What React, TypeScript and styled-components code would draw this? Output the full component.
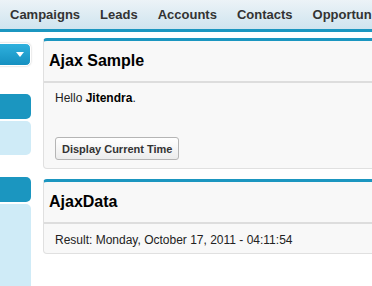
import React from "react";
import styled, { createGlobalStyle } from "styled-components";

const GlobalStyle = createGlobalStyle`
  html, body {
    margin: 0;
    padding: 0;
    background: #fff;
    font-family: "Liberation Sans", Arial, sans-serif;
    overflow: hidden;
  }
`;

const tabs = ["Campaigns", "Leads", "Accounts", "Contacts", "Opportunities"];

const App = () => {
  return (
    <>
      <GlobalStyle />
      <TabBar>
        {tabs.map((t) => (
          <Tab key={t}>{t}</Tab>
        ))}
      </TabBar>
      <Body>
        <Sidebar>
          <PickButton>
            <svg width="8" height="5" viewBox="0 0 8 5">
              <path d="M0 0 H8 L4 5 Z" fill="#fff" />
            </svg>
          </PickButton>
          <SideHead $top={28} />
          <SideBox $height={34} />
          <SideHead $top={22} />
          <SideBox $height={90} />
        </Sidebar>
        <Main>
          <Panel>
            <PanelHead>Ajax Sample</PanelHead>
            <PanelBody>
              <Line>
                Hello <b>Jitendra</b>.
              </Line>
              <Button>Display Current Time</Button>
            </PanelBody>
          </Panel>
          <Panel>
            <PanelHead>AjaxData</PanelHead>
            <PanelBody $compact>
              <Line>Result: Monday, October 17, 2011 - 04:11:54</Line>
            </PanelBody>
          </Panel>
        </Main>
      </Body>
    </>
  );
};

export default App;

const TabBar = styled.div`
  display: flex;
  height: 29px;
  background: linear-gradient(#ecf3f7, #cfe4ef);
  border-bottom: 3px solid #1b96c0;
  white-space: nowrap;
  overflow: hidden;
`;

const Tab = styled.div`
  padding: 0 10px;
  line-height: 30px;
  font-size: 13px;
  font-weight: bold;
  color: #333;
`;

const Body = styled.div`
  display: flex;
  gap: 12px;
`;

const Sidebar = styled.div`
  width: 31px;
  flex: none;
  display: flex;
  flex-direction: column;
`;

const PickButton = styled.div`
  margin: 11px 0 0 -6px;
  height: 21px;
  border: 1px solid #fff;
  border-radius: 0 5px 5px 0;
  box-shadow: 0 0 2px #bbb;
  background: linear-gradient(#2fb0dd, #1590c0);
  display: flex;
  align-items: center;
  justify-content: flex-end;
  padding-right: 6px;

  svg {
    display: block;
  }
`;

const SideHead = styled.div<{ $top: number }>`
  margin-top: ${({ $top }) => $top}px;
  height: 25px;
  background: #1b96c0;
  border-radius: 0 5px 5px 0;
`;

const SideBox = styled.div<{ $height: number }>`
  margin-top: 2px;
  height: ${({ $height }) => $height}px;
  background: #cfebf7;
  border-radius: 0 5px 5px 0;
`;

const Main = styled.div`
  flex: 1;
  overflow: hidden;
  padding-top: 6px;
  display: flex;
  flex-direction: column;
  gap: 10px;
`;

const Panel = styled.div`
  width: 400px;
  background: #f8f8f8;
  border: 1px solid #e0e0e0;
  border-top: 3px solid #1b96c0;
  border-radius: 4px;
`;

const PanelHead = styled.div`
  height: 40px;
  padding-left: 5px;
  line-height: 40px;
  font-size: 16px;
  font-weight: bold;
  color: #000;
  border-bottom: 2px solid #dddddd;
`;

const PanelBody = styled.div<{ $compact?: boolean }>`
  padding: ${({ $compact }) => ($compact ? "9px 11px 6px" : "8px 11px 8px")};
`;

const Line = styled.div`
  font-size: 12px;
  line-height: 14px;
  color: #222;

  b {
    color: #000;
  }
`;

const Button = styled.button`
  margin-top: 32px;
  display: block;
  height: 23px;
  padding: 0 6px;
  font-family: "Liberation Sans", Arial, sans-serif;
  font-size: 11px;
  font-weight: bold;
  color: #333;
  background: linear-gradient(#ffffff, #ececec);
  border: 1px solid #b5b5b5;
  border-radius: 3px;
`;
